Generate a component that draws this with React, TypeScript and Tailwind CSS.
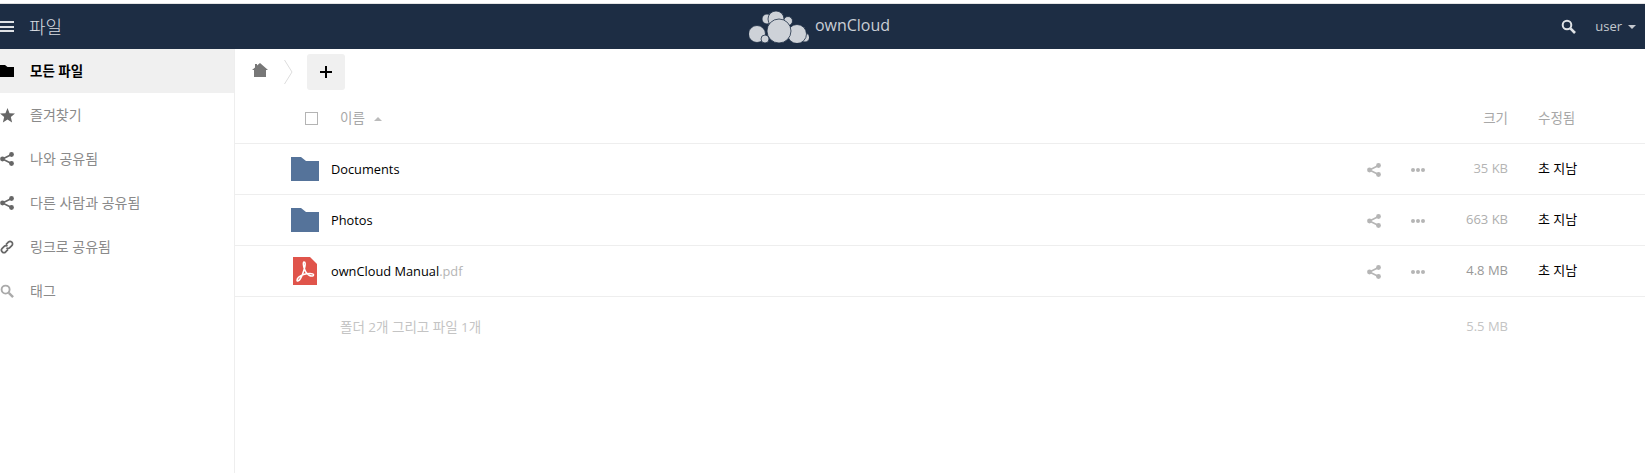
import React from "react";

const FONT = "font-['Open_Sans','Noto_Sans_CJK_KR',sans-serif]";

const FolderIcon = ({ className }: { className?: string }) => (
  <svg viewBox="0 0 28 24" className={className} fill="currentColor">
    <path d="M0 0H10L15 4H28V24H0Z" />
  </svg>
);

const ShareIcon = ({ className }: { className?: string }) => (
  <svg viewBox="0 0 14 14" className={className}>
    <path d="M11.5 2.5L2.5 7L11.5 11.5" fill="none" stroke="currentColor" strokeWidth="1.6" />
    <circle cx="11.5" cy="2.5" r="2.4" fill="currentColor" />
    <circle cx="2.5" cy="7" r="2.4" fill="currentColor" />
    <circle cx="11.5" cy="11.5" r="2.4" fill="currentColor" />
  </svg>
);

const SearchIcon = ({ className }: { className?: string }) => (
  <svg viewBox="0 0 15 15" className={className} fill="none" stroke="currentColor">
    <circle cx="6" cy="6" r="4.3" strokeWidth="2" />
    <path d="M9.4 9.4L14 14" strokeWidth="2.6" />
  </svg>
);

const StarIcon = ({ className }: { className?: string }) => (
  <svg viewBox="0 0 14 14" className={className} fill="currentColor">
    <path d="M7 0L8.9 4.8L14 5.2L10.1 8.4L11.3 13.5L7 10.7L2.7 13.5L3.9 8.4L0 5.2L5.1 4.8Z" />
  </svg>
);

const LinkIcon = ({ className }: { className?: string }) => (
  <svg viewBox="0 0 14 14" className={className} fill="none" stroke="currentColor" strokeWidth="1.7">
    <path d="M6 4.6L8.3 2.2C9.3 1.2 10.8 1.2 11.8 2.2C12.8 3.2 12.8 4.7 11.8 5.7L9.8 7.7C8.8 8.7 7.3 8.7 6.5 7.7" />
    <path d="M8 9.4L5.7 11.8C4.7 12.8 3.2 12.8 2.2 11.8C1.2 10.8 1.2 9.3 2.2 8.3L4.2 6.3C5.2 5.3 6.7 5.3 7.5 6.3" />
  </svg>
);

const PdfIcon = ({ className }: { className?: string }) => (
  <svg viewBox="0 0 24 28" className={className}>
    <path d="M0 0H17L24 7V28H0Z" fill="#e0544b" />
    <path
      d="M11 5C10 5 10.2 9 11.5 12C12.5 15 14.5 17.5 16.5 18.5C18.5 19.5 21 19 20.5 17.5C20 16 15 16 10.5 17.5C7 18.8 4 21.5 4 23.5C4 24.8 6 24 7.5 21.5C9.5 18.5 12.5 9 12.2 6.5C12.1 5.4 11.6 5 11 5Z"
      fill="none"
      stroke="#ffffff"
      strokeWidth="1.5"
    />
  </svg>
);

const Logo = () => (
  <svg viewBox="0 0 60 32" className="h-8 w-[60px]" fill="#ced2d8" stroke="#1d2d44" strokeWidth="0.8">
    <circle cx="18" cy="8" r="5" />
    <circle cx="39" cy="10" r="4.5" />
    <circle cx="27" cy="8" r="8" />
    <circle cx="56" cy="26.5" r="4.5" />
    <circle cx="48" cy="23" r="9.5" />
    <circle cx="8" cy="23" r="8.5" />
    <circle cx="16" cy="28" r="4" />
    <circle cx="30" cy="20" r="12" />
  </svg>
);

const navItems = [
  { label: "모든 파일", icon: <FolderIcon className="h-3 w-3.5 text-black" />, active: true },
  { label: "즐겨찾기", icon: <StarIcon className="h-[15px] w-[15px] text-[#666]" /> },
  { label: "나와 공유됨", icon: <ShareIcon className="h-3.5 w-3.5 text-[#666]" /> },
  { label: "다른 사람과 공유됨", icon: <ShareIcon className="h-3.5 w-3.5 text-[#666]" /> },
  { label: "링크로 공유됨", icon: <LinkIcon className="h-3.5 w-3.5 text-[#666]" /> },
  { label: "태그", icon: <SearchIcon className="h-3.5 w-3.5 text-[#aaa]" /> },
];

const files = [
  { name: "Documents", ext: "", size: "35 KB", sizeColor: "text-[#b4b4b4]", kind: "folder" },
  { name: "Photos", ext: "", size: "663 KB", sizeColor: "text-[#aeaeae]", kind: "folder" },
  { name: "ownCloud Manual", ext: ".pdf", size: "4.8 MB", sizeColor: "text-[#999]", kind: "pdf" },
];

export default function App() {
  return (
    <div className={`${FONT} h-[473px] w-[1645px] overflow-hidden bg-white text-[13px]`}>
      <div className="h-1 border-b border-[#e4e4e4] bg-white" />

      <header className="grid h-[45px] grid-cols-[1fr_auto_1fr] items-center bg-[#1d2d44]">
        <div className="flex items-center">
          <div className="flex w-3.5 flex-col gap-[2.5px]">
            <span className="h-[2px] bg-[#dfe2e6]" />
            <span className="h-[2px] bg-[#dfe2e6]" />
            <span className="h-[2px] bg-[#dfe2e6]" />
          </div>
          <span className="ml-[15px] text-lg font-light text-[#d8dce1]">파일</span>
        </div>
        <div className="-ml-[6px] flex items-center gap-1.5">
          <Logo />
          <span className="-mt-1 text-base text-[#c9ced5]">ownCloud</span>
        </div>
        <div className="flex items-center justify-end pr-[9px]">
          <SearchIcon className="h-[15px] w-[15px] text-[#dfe2e6]" />
          <span className="ml-[19px] text-[#c4c8ce]">user</span>
          <span className="ml-1.5 h-0 w-0 border-x-[4px] border-t-[4px] border-x-transparent border-t-[#c4c8ce]" />
        </div>
      </header>

      <div className="flex h-[424px]">
        <nav className="w-[235px] shrink-0 border-r border-[#eeeeee]">
          {navItems.map((item) => (
            <div
              key={item.label}
              className={`flex h-11 items-center ${
                item.active ? "bg-[#f0f0f0] text-[13.5px] font-semibold text-black" : "text-[14px] text-[#8a8a8a]"
              }`}
            >
              <span className="flex w-[30px] shrink-0">{item.icon}</span>
              <span className={item.active ? "" : "-mt-0.5"}>{item.label}</span>
            </div>
          ))}
        </nav>

        <main className="flex-1">
          <div className="flex h-[45px] items-center pl-[17px]">
            <svg viewBox="0 0 16 14" className="-mt-1 h-3.5 w-4 text-[#777]" fill="currentColor">
              <path d="M8 0L16 7H14V14H2V7H0L3 4.4V1H5V2.6Z" />
            </svg>
            <svg viewBox="0 0 9 24" className="ml-4 h-6 w-[9px]" fill="none" stroke="#dddddd">
              <path d="M0.5 0L8 12L0.5 24" />
            </svg>
            <button className="ml-[14px] flex h-9 w-[38px] items-center justify-center rounded-[3px] bg-[#f0f0f0]">
              <svg viewBox="0 0 12 12" className="h-3 w-3" stroke="#000000" strokeWidth="2">
                <path d="M6 0V12M0 6H12" />
              </svg>
            </button>
          </div>

          <div className="flex h-[50px] items-center border-b border-[#eeeeee] text-[#a8a8a8]">
            <span className="ml-[70px] h-[13px] w-[13px] border border-[#b4b4b4]" />
            <span className="ml-[22px] text-[13.5px]">이름</span>
            <span className="ml-[9px] h-0 w-0 border-x-[4px] border-b-[4px] border-x-transparent border-b-[#bbbbbb]" />
            <span className="ml-auto w-[60px] text-right text-[13.5px]">크기</span>
            <span className="ml-[30px] w-[107px] text-[13.5px]">수정됨</span>
          </div>

          {files.map((file) => (
            <div key={file.name} className="flex h-[51px] items-center border-b border-[#eeeeee]">
              <div className="ml-[56px] flex w-7 justify-center">
                {file.kind === "folder" ? (
                  <FolderIcon className="h-6 w-7 text-[#55739a]" />
                ) : (
                  <PdfIcon className="h-7 w-6" />
                )}
              </div>
              <span className="mt-0.5 ml-3 text-[12.8px] text-black">
                {file.name}
                <span className="text-[#b5b5b5]">{file.ext}</span>
              </span>
              <ShareIcon className="mt-0.5 ml-auto h-3.5 w-3.5 text-[#b5b5b5]" />
              <span className="mt-0.5 ml-[30px] flex w-[14px] justify-between">
                <span className="h-1 w-1 rounded-full bg-[#b5b5b5]" />
                <span className="h-1 w-1 rounded-full bg-[#b5b5b5]" />
                <span className="h-1 w-1 rounded-full bg-[#b5b5b5]" />
              </span>
              <span className={`ml-[23px] w-[60px] text-right ${file.sizeColor}`}>{file.size}</span>
              <span className="ml-[30px] w-[107px] text-black">초 지남</span>
            </div>
          ))}

          <div className="flex h-[60px] items-center text-[#c4c4c4]">
            <span className="ml-[105px] text-[13.5px]">폴더 2개 그리고 파일 1개</span>
            <span className="ml-auto w-[60px] text-right">5.5 MB</span>
            <span className="ml-[30px] w-[107px]" />
          </div>
        </main>
      </div>
    </div>
  );
}
